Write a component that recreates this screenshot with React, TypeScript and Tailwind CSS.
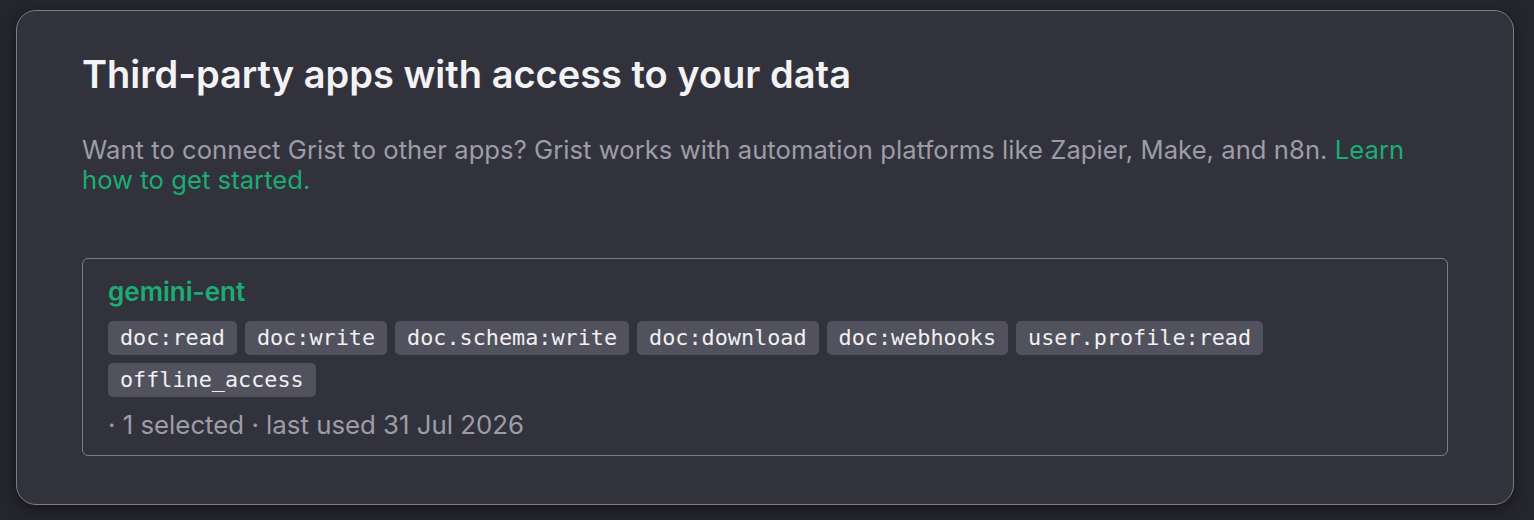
import React from 'react';

const scopes = [
    'doc:read',
    'doc:write',
    'doc.schema:write',
    'doc:download',
    'doc:webhooks',
    'user.profile:read',
    'offline_access',
];

const App: React.FC = () => {
    return (
        <div className="min-h-screen bg-[#25252d] pl-[16px] pr-[20px] pt-[10px] font-['Inter',sans-serif]">
            <section className="rounded-[20px] border border-[#7c7c86] bg-[#32323d] px-[65px] pt-[40px] pb-[48px] shadow-[0_4px_14px_rgba(0,0,0,0.45)]">
                <h1 className="text-[38px] font-semibold leading-[46px] text-[#f3f3f5]">
                    Third-party apps with access to your data
                </h1>
                <p className="mt-[38px] text-[25.6px] leading-[30px] tracking-[0.05px] text-[#9d9da7]">
                    Want to connect Grist to other apps? Grist works with automation platforms like Zapier, Make, and n8n.{' '}
                    <a className="text-[#1bad73]" href="#">Learn how to get started.</a>
                </p>

                {/* Connected app */}
                <div className="mt-[63px] rounded-[6px] border border-[#7c7c86] px-[25px] pt-[17px] pb-[14px]">
                    <div className="text-[26px] font-semibold leading-[32px] text-[#1bad73]">gemini-ent</div>
                    <div className="mt-[13px] flex flex-wrap gap-[8px]">
                        {scopes.map((s) => (
                            <span
                                key={s}
                                className="rounded-[5px] bg-[#52525e] px-[12px] h-[34px] leading-[34px] font-['DejaVu_Sans_Mono',monospace] text-[21.8px] text-[#f0f0f2]"
                            >
                                {s}
                            </span>
                        ))}
                    </div>
                    <div className="mt-[12px] text-[25.8px] leading-[32px] text-[#9d9da7]">
                        · 1 selected · last used 31 Jul 2026
                    </div>
                </div>
            </section>
        </div>
    );
};

export default App;
